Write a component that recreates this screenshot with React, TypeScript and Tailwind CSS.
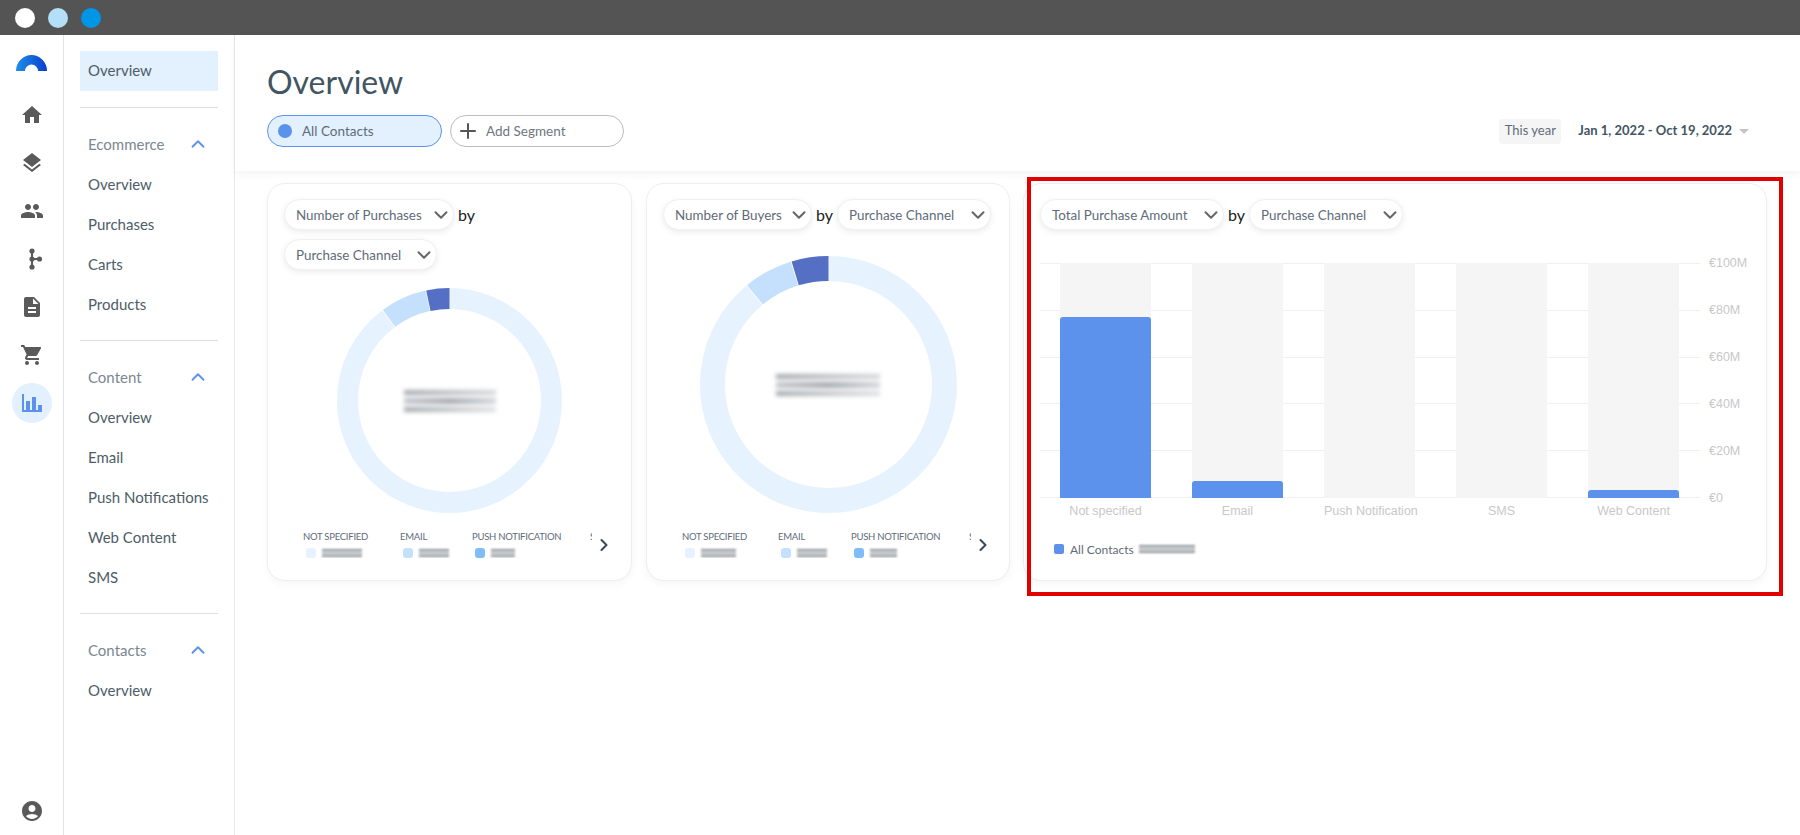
import { ChevronDown, ChevronRight, ChevronUp, Plus } from 'lucide-react';
import { MdAccountCircle, MdDescription, MdHome, MdLayers, MdPeople, MdShoppingCart } from 'react-icons/md';

const navSections = [
  { title: 'Ecommerce', items: ['Overview', 'Purchases', 'Carts', 'Products'] },
  { title: 'Content', items: ['Overview', 'Email', 'Push Notifications', 'Web Content', 'SMS'] },
  { title: 'Contacts', items: ['Overview'] },
];

const railIcons = [MdHome, MdLayers, MdPeople, BranchIcon, MdDescription, MdShoppingCart];

const bars = [
  { label: 'Not specified', height: 181 },
  { label: 'Email', height: 17 },
  { label: 'Push Notification', height: 0 },
  { label: 'SMS', height: 0 },
  { label: 'Web Content', height: 8 },
];

function BranchIcon({ size = 24 }: { size?: number }) {
  return (
    <svg width={size} height={size} viewBox="0 0 24 24" fill="#5a5a5a">
      <rect x="11" y="3" width="2" height="18" />
      <rect x="12" y="11" width="8" height="2" />
      <circle cx="12" cy="4" r="2.6" />
      <circle cx="12" cy="12" r="2.6" />
      <circle cx="12" cy="20" r="2.6" />
      <circle cx="19.5" cy="12" r="2.6" />
    </svg>
  );
}

function Logo() {
  return (
    <svg width="31" height="16" viewBox="0 0 31 16">
      <defs>
        <linearGradient id="logo" x1="0" y1="0" x2="1" y2="0">
          <stop offset="0" stopColor="#1f8fe8" />
          <stop offset="1" stopColor="#0a3fd0" />
        </linearGradient>
      </defs>
      <path d="M0 16A15.5 16 0 0 1 31 16H22A6.5 6.5 0 0 0 9 16Z" fill="url(#logo)" />
    </svg>
  );
}

function Rail() {
  return (
    <aside className="flex w-[64px] shrink-0 flex-col items-center border-r border-[#e3e3e3] pt-[4px]">
      <div className="mb-[4px] flex h-12 items-center">
        <Logo />
      </div>
      {railIcons.map((Icon, i) => (
        <div key={i} className="flex h-12 items-center text-[#5a5a5a]">
          <Icon size={24} />
        </div>
      ))}
      <div className="flex h-12 items-center">
        <div className="flex h-10 w-10 items-center justify-center rounded-full bg-[#e3f1fe]">
          <svg width="20" height="18" viewBox="0 0 20 18" fill="#5c91ec">
            <path d="M0 0h2v16h2V7h4v9h2V3h4v13h2v-5h4v7H0z" />
          </svg>
        </div>
      </div>
      <div className="mt-auto flex h-12 items-center text-[#5a5a5a]">
        <MdAccountCircle size={24} />
      </div>
    </aside>
  );
}

function SubNav() {
  return (
    <nav className="w-[171px] shrink-0 border-r border-[#e8e8e8] px-4 pt-4 text-[15px] text-[#4e5c68]">
      <div className="flex h-10 items-center bg-[#e3f1fe] pb-[2px] pl-2">Overview</div>
      {navSections.map((section, i) => (
        <div key={section.title}>
          <div className={`h-px bg-[#e0e0e0] ${i === 0 ? 'mt-4' : 'mt-[15px]'}`}></div>
          <div className="mt-[17px] flex h-10 items-center justify-between pb-[2px] pl-2 pr-[9px] text-[#7b8792]">
            {section.title}
            <ChevronUp size={22} strokeWidth={2} className="text-[#5c91ec]" />
          </div>
          {section.items.map((item) => (
            <div key={item} className="flex h-10 items-center whitespace-nowrap pb-[2px] pl-2">
              {item}
            </div>
          ))}
        </div>
      ))}
    </nav>
  );
}

function Header() {
  return (
    <header className="relative z-10 h-[136px] pl-[32px] pr-[51px] pt-[25px] shadow-[0_3px_8px_rgba(0,0,0,0.05)]">
      <h1 className="h-[44px] text-[32px] font-normal leading-[43px] text-[#425563]">Overview</h1>
      <div className="mt-[11px] flex items-center justify-between">
        <div className="flex gap-2 text-[13.5px]">
          <div className="flex h-8 w-[175px] items-center rounded-full border border-[#5c91ec] bg-[#e3f1fe] pl-[10px] text-[#5f6b78]">
            <span className="mr-[10px] h-[14px] w-[14px] rounded-full bg-[#5c91ec]"></span>
            All Contacts
          </div>
          <div className="flex h-8 w-[174px] items-center rounded-full border border-[#bdbdbd] pl-[5px] text-[#6e7780]">
            <Plus size={24} strokeWidth={2} className="mr-[6px] text-[#555555]" />
            Add Segment
          </div>
        </div>
        <div className="flex items-center text-[13px]">
          <span className="flex h-[25px] w-[62px] items-center justify-center rounded-sm bg-[#f5f5f5] text-[#5f6b78]">This year</span>
          <span className="ml-[17px] font-bold text-[#425563]">Jan 1, 2022 - Oct 19, 2022</span>
          <span className="ml-[7px] h-0 w-0 border-x-[5px] border-t-[5px] border-x-transparent border-t-[#c4c4c4]"></span>
        </div>
      </div>
    </header>
  );
}

function Select({ label, width }: { label: string; width: number }) {
  return (
    <div
      className="flex h-[31px] items-center justify-between rounded-full border border-[#f0f0f0] bg-white pl-[11px] pr-px text-[13.4px] text-[#5f6b78] shadow-[0_2px_6px_rgba(0,0,0,0.08)]"
      style={{ width }}
    >
      <span className="pt-px">{label}</span>
      <ChevronDown size={22} strokeWidth={2.2} className="text-[#666666]" />
    </div>
  );
}

function Blur({ width }: { width: number }) {
  return (
    <div className="flex h-[8px] flex-col justify-between blur-[1px]" style={{ width }}>
      <div className="h-[2px] bg-[#8d9499]"></div>
      <div className="h-[2px] bg-[#a8aeb2]"></div>
      <div className="h-[2px] bg-[#8d9499]"></div>
    </div>
  );
}

function CenterBlur({ width }: { width: number }) {
  return (
    <div className="flex h-[22px] flex-col justify-between blur-[2px]" style={{ width }}>
      <div className="h-[5px] bg-linear-to-r from-[#a4a9ad] to-[#d4d7d9]"></div>
      <div className="h-[6px] bg-linear-to-r from-[#c4c7ca] via-[#a4a9ad] to-[#d4d7d9]"></div>
      <div className="h-[5px] bg-linear-to-r from-[#a4a9ad] to-[#dfe1e3]"></div>
    </div>
  );
}

function Ring({ size, stroke }: { size: number; stroke: number }) {
  const r = (size - stroke) / 2;
  const c = size / 2;
  const isLarge = size > 230;
  const dark = isLarge ? 16.7 : 12;
  const light = isLarge ? 39.4 : 36.4;
  const arc = (start: number, sweep: number, color: string) => (
    <circle
      cx={c}
      cy={c}
      r={r}
      fill="none"
      stroke={color}
      strokeWidth={stroke}
      pathLength={360}
      strokeDasharray={`${sweep} ${360 - sweep}`}
      strokeDashoffset={-start}
      transform={`rotate(-90 ${c} ${c})`}
    />
  );
  return (
    <svg width={size} height={size} className="block">
      {arc(0, 360 - light - 0.4, '#e6f3ff')}
      {arc(360 - light, light - dark - 0.4, '#c4e0fd')}
      {arc(360 - dark, dark, '#546fc4')}
    </svg>
  );
}

function DonutCard({
  width,
  metric,
  metricWidth,
  channelWidth,
  ringSize,
  ringStroke,
  ringTop,
  centerWidth,
  columns,
  values,
}: {
  width: number;
  metric: string;
  metricWidth: number;
  channelWidth: number;
  ringSize: number;
  ringStroke: number;
  ringTop: number;
  centerWidth: number;
  columns: number[];
  values: number[];
}) {
  const legend = [
    { label: 'NOT SPECIFIED', color: 'bg-[#e6f3ff]' },
    { label: 'EMAIL', color: 'bg-[#c4e0fd]' },
    { label: 'PUSH NOTIFICATION', color: 'bg-[#80bcfb]' },
    { label: 'SMS', color: 'bg-[#546fc4]' },
  ];
  return (
    <section
      className="h-[398px] shrink-0 rounded-[18px] border border-[#eeeeee] bg-white px-[16px] pt-[15px] shadow-[0_3px_8px_rgba(0,0,0,0.04)]"
      style={{ width }}
    >
      <div className="flex flex-wrap items-center gap-x-[4px] gap-y-[9px]">
        <Select label={metric} width={metricWidth} />
        <span className="text-[16px] text-[#222222]">by</span>
        <Select label="Purchase Channel" width={channelWidth} />
      </div>
      <div className="relative mx-auto" style={{ width: ringSize, marginTop: ringTop }}>
        <Ring size={ringSize} stroke={ringStroke} />
        <div className="absolute inset-0 flex items-center justify-center">
          <CenterBlur width={centerWidth} />
        </div>
      </div>
      <div className="mt-[18px] flex items-center pl-[19px]">
        <div className="flex w-[289px] shrink-0 overflow-hidden">
          {legend.map((item, i) => (
            <div key={item.label} className="shrink-0" style={{ width: columns[i] }}>
              <div className="whitespace-nowrap text-[9.5px] leading-[12px] tracking-[-0.25px] text-[#5f6b78]">{item.label}</div>
              <div className="ml-[3px] mt-[5px] flex h-[10px] items-center gap-[6px]">
                <span className={`h-[10px] w-[10px] rounded-[3px] ${item.color}`}></span>
                <Blur width={values[i]} />
              </div>
            </div>
          ))}
        </div>
        <ChevronRight size={20} strokeWidth={2.5} className="ml-[2px] text-[#3c4a57]" />
      </div>
    </section>
  );
}

function BarCard() {
  return (
    <section className="ml-[-1px] h-[398px] flex-1 rounded-[18px] border border-[#eeeeee] bg-white px-[16px] pt-[15px] shadow-[0_3px_8px_rgba(0,0,0,0.04)]">
      <div className="flex items-center gap-x-[4px]">
        <Select label="Total Purchase Amount" width={184} />
        <span className="text-[16px] text-[#222222]">by</span>
        <Select label="Purchase Channel" width={154} />
      </div>
      <div className="mt-[33px] flex items-start">
        <div className="relative h-[235px] w-[660px]">
          <div className="absolute inset-0 flex flex-col justify-between">
            {[0, 1, 2, 3, 4, 5].map((n) => (
              <div key={n} className="h-px bg-[#f0f0f0]"></div>
            ))}
          </div>
          <div className="relative flex h-full gap-[41px] pl-[20px]">
            {bars.map((bar) => (
              <div key={bar.label} className="flex w-[91px] items-end bg-[#f5f5f5]">
                <div className="w-full rounded-t-[3px] bg-[#5c91ec]" style={{ height: bar.height }}></div>
              </div>
            ))}
          </div>
        </div>
        <div className="mb-[-7px] ml-[9px] mt-[-7px] flex h-[249px] flex-col justify-between font-['Liberation_Sans',sans-serif] text-[12.5px] leading-[14px] text-[#c8c8c8]">
          {['€100M', '€80M', '€60M', '€40M', '€20M', '€0'].map((tick) => (
            <span key={tick}>{tick}</span>
          ))}
        </div>
      </div>
      <div className="mt-[6px] flex gap-[41px] pl-[20px] font-['Liberation_Sans',sans-serif] text-[12.5px] leading-[14px] text-[#c8c8c8]">
        {bars.map((bar) => (
          <span key={bar.label} className="w-[91px] whitespace-nowrap text-center">
            {bar.label}
          </span>
        ))}
      </div>
      <div className="ml-[14px] mt-[24px] flex h-[14px] items-center text-[12px] text-[#5f6b78]">
        <span className="mr-[6px] h-[10px] w-[10px] rounded-[2px] bg-[#5c91ec]"></span>
        <span className="pt-[2px]">All Contacts</span>
        <div className="ml-[5px]">
          <Blur width={56} />
        </div>
      </div>
    </section>
  );
}

export default function App() {
  return (
    <div className="relative flex h-screen w-full flex-col overflow-hidden bg-white font-['Lato',sans-serif]">
      <div className="flex h-[35px] shrink-0 items-center gap-[13px] bg-[#545454] pl-[15px]">
        <span className="h-5 w-5 rounded-full bg-white"></span>
        <span className="h-5 w-5 rounded-full bg-[#b3e0f8]"></span>
        <span className="h-5 w-5 rounded-full bg-[#0096e8]"></span>
      </div>
      <div className="flex min-h-0 flex-1">
        <Rail />
        <SubNav />
        <main className="min-w-0 flex-1">
          <Header />
          <div className="flex items-start gap-[14px] pl-[32px] pr-[33px] pt-[12px]">
            <DonutCard
              width={365}
              metric="Number of Purchases"
              metricWidth={170}
              channelWidth={153}
              ringSize={225}
              ringStroke={21}
              ringTop={18}
              centerWidth={92}
              columns={[97, 72, 118, 40]}
              values={[40, 30, 24, 20]}
            />
            <DonutCard
              width={364}
              metric="Number of Buyers"
              metricWidth={149}
              channelWidth={154}
              ringSize={257}
              ringStroke={25}
              ringTop={26}
              centerWidth={104}
              columns={[96, 73, 118, 40]}
              values={[35, 30, 27, 20]}
            />
            <BarCard />
          </div>
        </main>
      </div>
      {/* red marker drawn over the third card */}
      <div className="pointer-events-none absolute left-[1027px] top-[177px] z-20 h-[419px] w-[756px] border-4 border-[#e00000]"></div>
    </div>
  );
}
